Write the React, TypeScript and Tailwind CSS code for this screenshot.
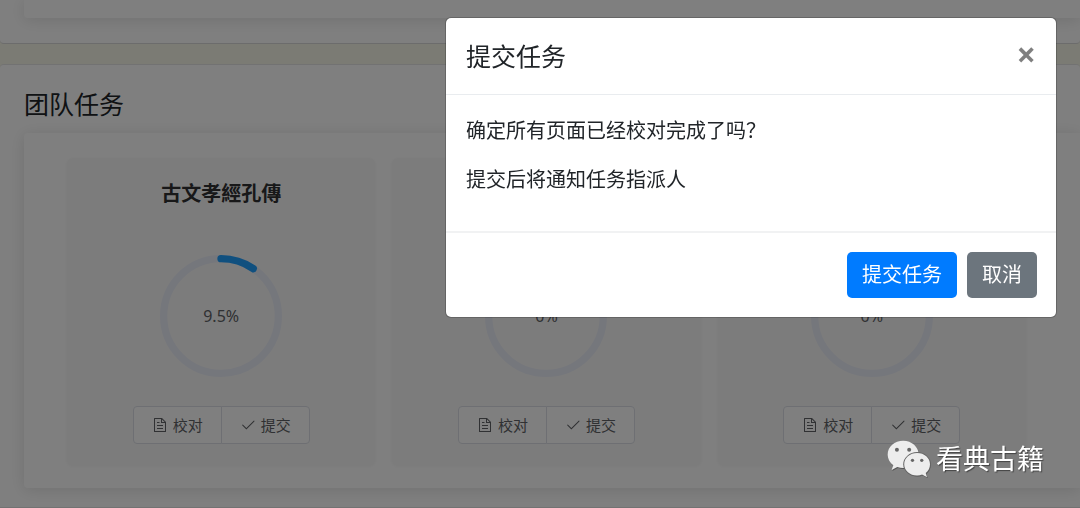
import { useState } from "react";

type Task = { id: number; title?: string; percent: number };

const TASKS: Task[] = [
  { id: 1, title: "古文孝經孔傳", percent: 9.5 },
  { id: 2, percent: 0 },
  { id: 3, percent: 0 },
];

function DocumentIcon() {
  return (
    <svg viewBox="0 0 1024 1024" fill="currentColor" className="h-4 w-4" aria-hidden="true">
      <path d="M832 384H576V128H192v768h640zm-26.496-64L640 154.496V320zM160 64h480l256 256v608a32 32 0 0 1-32 32H160a32 32 0 0 1-32-32V96a32 32 0 0 1 32-32m160 448h384v64H320zm0-192h160v64H320zm0 384h384v64H320z" />
    </svg>
  );
}

function CheckIcon() {
  return (
    <svg viewBox="0 0 1024 1024" fill="currentColor" className="h-4 w-4" aria-hidden="true">
      <path d="M406.656 706.944 195.84 496.256a32 32 0 1 0-45.248 45.248l256 256 512-512a32 32 0 0 0-45.248-45.248L406.592 706.944z" />
    </svg>
  );
}

function WechatIcon() {
  return (
    <svg viewBox="0 0 136 114" className="h-[38px] w-[45px]" aria-hidden="true">
      <g fill="#555" transform="translate(2 3)">
        <path d="M49 2C23 2 2 20 2 44c0 13 7 24 17 32l-5 14 17-9c6 2 12 3 18 3 26 0 47-17 47-40S75 2 49 2z" />
        <path d="M91 39c-22 0-39 15-39 34s17 34 39 34c5 0 10-1 15-3l15 8-4-13c8-6 13-15 13-26 0-19-17-34-39-34z" />
      </g>
      <path fill="#ededed" d="M49 2C23 2 2 20 2 44c0 13 7 24 17 32l-5 14 17-9c6 2 12 3 18 3 26 0 47-17 47-40S75 2 49 2z" />
      <ellipse cx="91" cy="73" rx="42" ry="37" fill="#666" />
      <path fill="#ededed" d="M91 39c-22 0-39 15-39 34s17 34 39 34c5 0 10-1 15-3l15 8-4-13c8-6 13-15 13-26 0-19-17-34-39-34z" />
      <g fill="#666">
        <circle cx="30" cy="29" r="6" />
        <circle cx="67" cy="29" r="6" />
        <circle cx="77" cy="61" r="5" />
        <circle cx="105" cy="61" r="5" />
      </g>
    </svg>
  );
}

function ProgressRing({ percent }: { percent: number }) {
  const length = 2 * Math.PI * 47;
  return (
    <div className="relative h-[122px] w-[122px]">
      <svg viewBox="0 0 100 100" fill="none" strokeWidth="6" className="h-full w-full -rotate-90">
        <circle cx="50" cy="50" r="47" stroke="#ebeef8" />
        {percent > 0 && (
          <circle
            cx="50"
            cy="50"
            r="47"
            stroke="#20a0ff"
            strokeLinecap="round"
            strokeDasharray={`${(length * percent) / 100} ${length}`}
          />
        )}
      </svg>
      <span className="absolute inset-0 grid place-items-center text-base text-[#606266]">{percent}%</span>
    </div>
  );
}

function TaskCard({ task, onSubmit }: { task: Task; onSubmit: () => void }) {
  return (
    <div className="flex flex-1 flex-col items-center rounded-md bg-[#f9f9f9] pt-[21px] pb-[21px] shadow-[0_1px_4px_rgba(0,0,0,0.05)]">
      <h3 className="h-[30px] text-[20px] leading-[30px] font-bold text-[#303133]">{task.title}</h3>
      <div className="mt-[46px]">
        <ProgressRing percent={task.percent} />
      </div>
      <div className="mt-[29px] flex text-[15px] leading-5 text-[#606266]">
        <button type="button" className="flex h-[38px] items-center gap-[5px] rounded-l-sm border border-[#dcdfe6] bg-white px-[18px]">
          <DocumentIcon />
          校对
        </button>
        <button
          type="button"
          onClick={onSubmit}
          className="-ml-px flex h-[38px] items-center gap-[5px] rounded-r-sm border border-[#dcdfe6] bg-white px-[18px]"
        >
          <CheckIcon />
          提交
        </button>
      </div>
    </div>
  );
}

function SubmitDialog({ onClose }: { onClose: () => void }) {
  return (
    <div className="fixed inset-0 z-10 flex items-start justify-end bg-black/50 pt-[17px] pr-[23px]">
      <div
        role="dialog"
        aria-modal="true"
        aria-labelledby="submit-title"
        className="w-full max-w-[612px] rounded-md border border-black/20 bg-white bg-clip-padding text-[#212529]"
      >
        <div className="flex items-center justify-between border-b border-[#e9ecef] px-5 py-5">
          <h5 id="submit-title" className="text-[25px] leading-9">提交任务</h5>
          <button
            type="button"
            aria-label="关闭"
            onClick={onClose}
            className="flex h-9 items-start font-['Open_Sans',sans-serif] text-[34px] leading-8 font-bold text-black/50"
          >
            ×
          </button>
        </div>
        <div className="space-y-5 px-5 pt-[21px] pb-[37px] text-[20px] leading-[29px]">
          <p>确定所有页面已经校对完成了吗？</p>
          <p>提交后将通知任务指派人</p>
        </div>
        <div className="flex justify-end gap-2.5 border-t-2 border-[#f1f2f3] px-[19px] py-[19px] text-[20px] leading-[30px] text-white">
          <button type="button" onClick={onClose} className="rounded-[5px] bg-[#007bff] px-[15px] py-2">提交任务</button>
          <button type="button" onClick={onClose} className="rounded-[5px] bg-[#6c757d] px-[15px] py-2">取消</button>
        </div>
      </div>
    </div>
  );
}

export default function App() {
  const [open, setOpen] = useState(true);

  return (
    <div className="min-h-screen overflow-hidden bg-[#f6f7e8] font-['Noto_Sans','Noto_Sans_CJK_SC',sans-serif]">
      <section className="overflow-hidden rounded-b border-b border-black/15 bg-white pb-[25px] pl-6">
        <div className="h-[18px] rounded-bl bg-white shadow-[0_2px_16px_rgba(0,0,0,0.12)]" />
      </section>

      <section className="mt-5 overflow-hidden rounded-t border-y border-black/10 bg-white pb-[19px] pl-6">
        <h2 className="pt-[21px] pb-[11px] text-[25px] leading-9 text-[#212529]">团队任务</h2>
        <div className="flex gap-[17px] rounded-l bg-white pt-[25px] pr-[54px] pb-[23px] pl-[43px] shadow-[0_2px_16px_rgba(0,0,0,0.12)]">
          {TASKS.map((task) => (
            <TaskCard key={task.id} task={task} onSubmit={() => setOpen(true)} />
          ))}
        </div>
      </section>

      {open && <SubmitDialog onClose={() => setOpen(false)} />}

      <div className="pointer-events-none fixed right-9 bottom-[30px] z-20 flex items-center gap-1 text-[27px] leading-9 text-white [text-shadow:1px_1px_1px_#444]">
        <WechatIcon />
        看典古籍
      </div>
    </div>
  );
}
